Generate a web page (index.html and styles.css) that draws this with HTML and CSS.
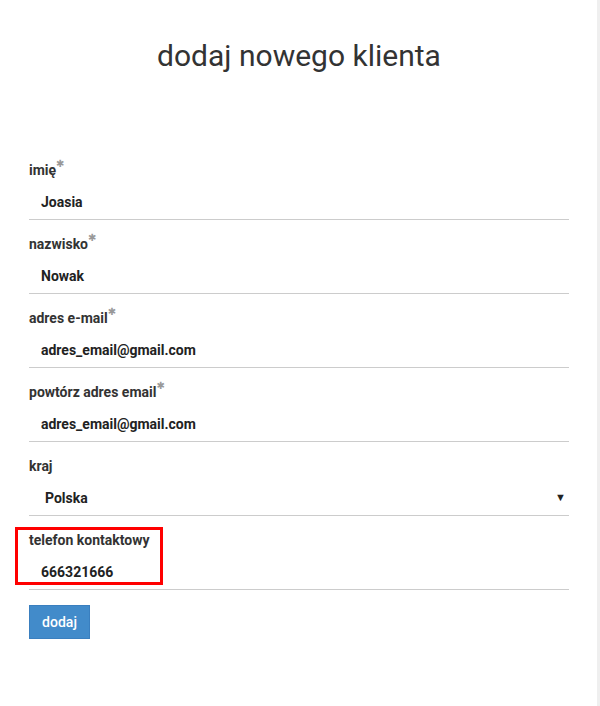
FILE: index.html
```html
<!DOCTYPE html>
<html lang="pl">
<head>
<meta charset="utf-8">
<title>dodaj nowego klienta</title>
<link rel="stylesheet" href="styles.css">
</head>
<body>
<main class="page">
  <h1 class="title">dodaj nowego klienta</h1>
  <form class="form">
    <div class="field">
      <label class="label">imię<span class="req">✱</span></label>
      <input class="input" type="text" value="Joasia">
    </div>
    <div class="field">
      <label class="label">nazwisko<span class="req">✱</span></label>
      <input class="input" type="text" value="Nowak">
    </div>
    <div class="field">
      <label class="label">adres e-mail<span class="req">✱</span></label>
      <input class="input" type="text" value="adres_email@gmail.com">
    </div>
    <div class="field">
      <label class="label">powtórz adres email<span class="req">✱</span></label>
      <input class="input" type="text" value="adres_email@gmail.com">
    </div>
    <div class="field">
      <label class="label">kraj</label>
      <div class="select-wrap">
        <select class="select"><option>Polska</option></select>
        <span class="arrow">▼</span>
      </div>
    </div>
    <div class="field field-marked">
      <label class="label">telefon kontaktowy</label>
      <input class="input" type="text" value="666321666">
      <span class="mark"></span>
    </div>
    <button class="btn" type="button">dodaj</button>
  </form>
</main>
<div class="edge"></div>
</body>
</html>
```
FILE: styles.css
```css
html, body {
  margin: 0;
  padding: 0;
  background: #fff;
}
body {
  display: flex;
  min-height: 706px;
  font-family: Roboto, "Liberation Sans", Arial, sans-serif;
  color: #333;
}
.page {
  flex: 1;
  padding: 0 28px 0 29px;
}
.edge {
  width: 3px;
  background: #efefef;
}
.title {
  margin: 38px 0 0;
  height: 108px;
  font-size: 30px;
  line-height: 36px;
  font-weight: 400;
  text-align: center;
  color: #333;
}
.form {
  width: 540px;
}
.field {
  position: relative;
  padding: 16px 0 7px;
  border-bottom: 1px solid #ccc;
}
.label {
  display: block;
  font-size: 14px;
  line-height: 16px;
  font-weight: 700;
  color: #333;
}
.req {
  color: #999;
  font-family: "DejaVu Sans", sans-serif;
  font-size: 10px;
  font-weight: 400;
  position: relative;
  top: -8px;
  line-height: 0;
}
.input {
  display: block;
  box-sizing: border-box;
  width: 100%;
  margin-top: 14px;
  height: 20px;
  padding: 0 12px;
  border: none;
  outline: none;
  background: transparent;
  font-family: inherit;
  font-size: 14px;
  font-weight: 700;
  color: #222;
}
.select-wrap {
  position: relative;
  margin-top: 14px;
}
.select {
  display: block;
  width: 100%;
  height: 20px;
  padding: 0 0 0 16px;
  border: none;
  outline: none;
  background: transparent;
  appearance: none;
  -webkit-appearance: none;
  font-family: inherit;
  font-size: 14px;
  font-weight: 700;
  color: #222;
}
.arrow {
  position: absolute;
  right: 3px;
  top: 3px;
  font-size: 11px;
  line-height: 14px;
  color: #222;
  pointer-events: none;
}
.mark {
  position: absolute;
  left: -14px;
  top: 11px;
  width: 142px;
  height: 52px;
  border: 3px solid #f00;
  pointer-events: none;
}
.btn {
  margin-top: 15px;
  width: 61px;
  height: 34px;
  padding: 0;
  border: 1px solid #3a7fbf;
  background: #428bca;
  color: #fff;
  font-family: inherit;
  font-size: 14px;
  font-weight: 500;
}
```
